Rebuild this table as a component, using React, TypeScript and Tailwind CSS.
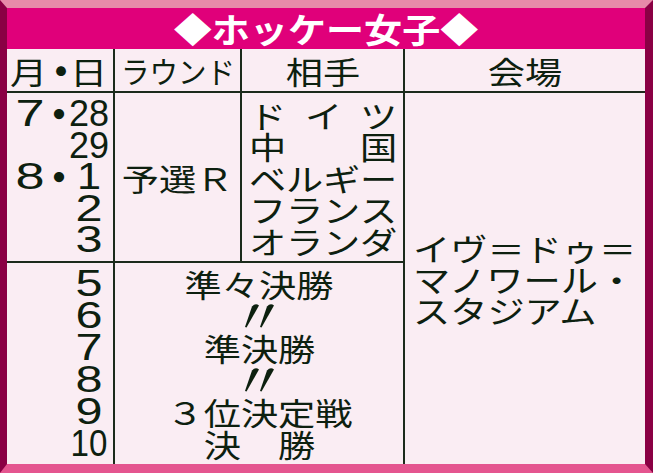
const jp = "font-['Noto_Sans_CJK_JP',sans-serif]";
const num = "font-['Liberation_Sans',sans-serif]";

function Ditto() {
  return (
    <svg width="34" height="26" viewBox="0 0 34 26">
      <path d="M10 3.5 Q13.5 -0.5 17 2.5 L4.5 24.5 L3 24 Z" fill="#0d200f" />
      <path d="M25 3.5 Q28.5 -0.5 32 2.5 L19.5 24.5 L18 24 Z" fill="#0d200f" />
    </svg>
  );
}

function Day({ d }: { d: string }) {
  let cls = "";
  if (d.length === 1) cls = d === "1" ? "scale-x-[1.2]" : "scale-x-[1.35]";
  if (d === "10") cls = "scale-x-[0.92]";
  return <span className={`inline-block ${num} text-[36px] leading-none ${cls}`}>{d}</span>;
}

function DateRow({ m, d, h }: { m?: string; d: string; h: string }) {
  return (
    <div className={`flex items-center ${h}`}>
      <div className="w-[46px] flex justify-center">
        {m && <span className={`inline-block ${num} text-[36px] leading-none scale-x-[1.45]`}>{m}</span>}
      </div>
      <div className="w-[18px] flex justify-center">
        {m && <span className="inline-block text-[48px] leading-none -translate-y-[3px] -translate-x-[3px]">・</span>}
      </div>
      <div className="w-[36px] flex justify-center">
        <Day d={d} />
      </div>
    </div>
  );
}

function Wide({ children, className = "" }: { children: React.ReactNode; className?: string }) {
  return <span className={`inline-block text-[31px] leading-none scale-x-[1.2] ${className}`}>{children}</span>;
}

const teams = [["ド", "イ", "ツ"], ["中", "国"], ["ベ", "ル", "ギ", "ー"], ["フ", "ラ", "ン", "ス"], ["オ", "ラ", "ン", "ダ"]];

export default function App() {
  const line = "border-[#1b2b1b]";
  return (
    <div
      className={`w-[653px] h-[473px] flex flex-col border-t-[8px] border-l-[7px] border-r-[8px] border-b-[9px] border-t-[#e78aa9] border-l-[#8a0044] border-r-[#8a0044] border-b-[#e4558f] bg-[#faedf3] text-[#0d200f] ${jp}`}
    >
      <div className="h-[41px] shrink-0 bg-[#e0007a] flex items-center justify-center">
        <span className="inline-block text-white font-bold text-[34px] leading-none scale-x-[1.12]">◆ホッケー女子◆</span>
      </div>

      <div className="flex-1 grid grid-cols-[108px_127px_163px_240px] grid-rows-[44px_170px_201px]">
        {/* header */}
        <div className={`border-r-2 border-b-2 ${line} flex items-center`}>
          <div className="w-[42px] flex justify-center"><Wide>月</Wide></div>
          <div className="w-[24px] flex justify-center">
            <span className="inline-block text-[46px] leading-none -translate-y-[2px]">・</span>
          </div>
          <div className="w-[30px] flex justify-center"><Wide>日</Wide></div>
        </div>
        <div className={`border-r-2 border-b-2 ${line} flex items-center justify-center`}>
          <span className="inline-block text-[30px] leading-none scale-x-[0.95]">ラウンド</span>
        </div>
        <div className={`border-r-2 border-b-2 ${line} flex items-center justify-center`}>
          <Wide>相手</Wide>
        </div>
        <div className={`border-b-2 ${line} flex items-center justify-center`}>
          <Wide>会場</Wide>
        </div>

        {/* group stage */}
        <div className={`border-r-2 border-b-2 ${line} flex flex-col justify-center`}>
          <DateRow m="7" d="28" h="h-[31.5px]" />
          <DateRow d="29" h="h-[31.5px]" />
          <DateRow m="8" d="1" h="h-[31.5px]" />
          <DateRow d="2" h="h-[31.5px]" />
          <DateRow d="3" h="h-[31.5px]" />
        </div>
        <div className={`border-r-2 border-b-2 ${line} flex items-center justify-center`}>
          <Wide>予選Ｒ</Wide>
        </div>
        <div className={`border-r-2 border-b-2 ${line} flex flex-col justify-center pl-[10px] pr-[9px]`}>
          {teams.map((t, i) => (
            <div key={i} className="h-[31.5px] flex items-center justify-between">
              {t.map((c, j) => (
                <Wide key={j}>{c}</Wide>
              ))}
            </div>
          ))}
        </div>
        <div className="row-span-2 flex flex-col justify-center pl-[8px]">
          {["イヴ＝ドゥ＝", "マノワール・", "スタジアム"].map((s) => (
            <div key={s} className="h-[31px] flex items-center">
              <Wide className="origin-left">{s}</Wide>
            </div>
          ))}
        </div>

        {/* finals */}
        <div className={`border-r-2 ${line} flex flex-col justify-center`}>
          {["5", "6", "7", "8", "9", "10"].map((d) => (
            <DateRow key={d} d={d} h="h-[32px]" />
          ))}
        </div>
        <div className={`col-span-2 border-r-2 ${line} flex flex-col justify-center items-center`}>
          <div className="h-[32px] flex items-center"><Wide>準々決勝</Wide></div>
          <div className="h-[32px] flex items-center"><Ditto /></div>
          <div className="h-[32px] flex items-center"><Wide>準決勝</Wide></div>
          <div className="h-[32px] flex items-center"><Ditto /></div>
          <div className="h-[32px] flex items-center"><Wide>３位決定戦</Wide></div>
          <div className="h-[32px] flex items-center"><Wide>決　勝</Wide></div>
        </div>
      </div>
    </div>
  );
}
